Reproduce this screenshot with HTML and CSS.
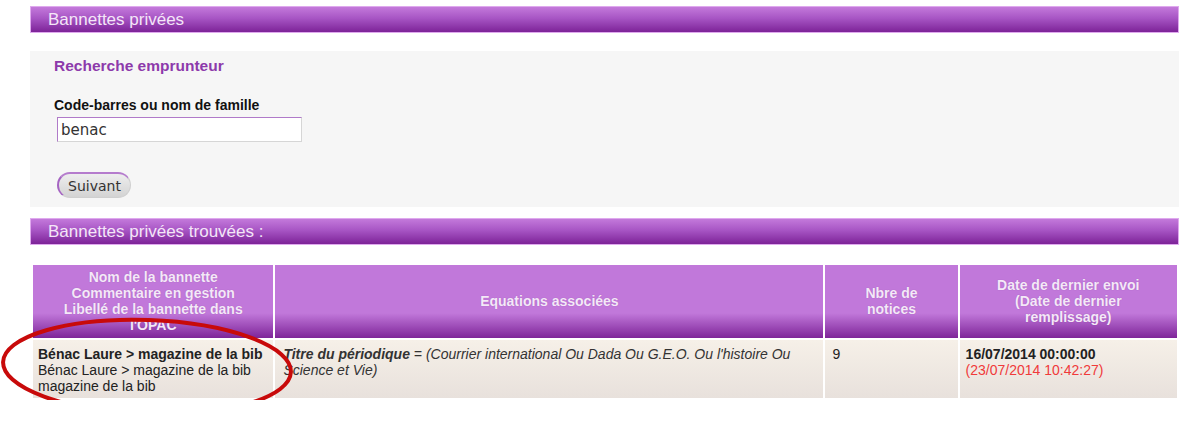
FILE: index.html
```html
<!DOCTYPE html>
<html lang="fr">
<head>
<meta charset="utf-8">
<title>Bannettes privées</title>
<link rel="stylesheet" href="styles.css">
</head>
<body>
<div class="page">
  <div class="bar">Bannettes privées</div>
  <form class="panel">
    <h3 class="panel-title">Recherche emprunteur</h3>
    <label class="field-label" for="q">Code-barres ou nom de famille</label>
    <input class="field" id="q" type="text" value="benac">
    <div class="actions"><button type="button" class="btn">Suivant</button></div>
  </form>
  <div class="bar bar2">Bannettes privées trouvées :</div>
  <div class="table-wrap">
    <table class="results">
      <thead>
        <tr>
          <th class="c1">Nom de la bannette<br>Commentaire en gestion<br>Libellé de la bannette dans l'OPAC</th>
          <th class="c2">Equations associées</th>
          <th class="c3">Nbre de<br>notices</th>
          <th class="c4">Date de dernier envoi<br>(Date de dernier remplissage)</th>
        </tr>
      </thead>
      <tbody>
        <tr>
          <td class="d1"><b>Bénac Laure &gt; magazine de la bib</b><br>Bénac Laure &gt; magazine de la bib<br>magazine de la bib</td>
          <td class="eq"><b>Titre du périodique</b> = (Courrier international Ou Dada Ou G.E.O. Ou l'histoire Ou Science et Vie)</td>
          <td class="d3">9</td>
          <td class="d4"><b>16/07/2014 00:00:00</b><br><span class="red">(23/07/2014 10:42:27)</span></td>
        </tr>
      </tbody>
    </table>
    <svg class="circle" width="300" height="110" viewBox="0 0 300 110" aria-hidden="true">
      <ellipse cx="147" cy="52" rx="144" ry="47" fill="none" stroke="#c80a0a" stroke-width="4" transform="rotate(2 147 52)"/>
    </svg>
  </div>
</div>
</body>
</html>
```
FILE: styles.css
```css
html, body { margin: 0; padding: 0; background: #fff; }
body { font-family: "Liberation Sans", Arial, sans-serif; color: #222; }
.page { width: 1149px; padding: 6px 0 0 30px; }
.bar {
  height: 27px;
  box-sizing: border-box;
  border: 1px solid #dfa9ee;
  background: linear-gradient(#c379db 0%, #a755c4 45%, #7d2398 100%);
  color: #f4e6f8;
  font-size: 17px;
  line-height: 25px;
  padding-left: 17px;
}
.panel {
  margin: 18px 0 0;
  height: 156px;
  box-sizing: border-box;
  background: #f6f6f6;
  padding: 6px 0 0 24px;
}
.panel-title {
  margin: 0;
  font-size: 15.5px;
  line-height: 18px;
  color: #8d3aab;
  font-weight: bold;
}
.field-label {
  display: block;
  margin-top: 22px;
  font-size: 14px;
  font-weight: bold;
  line-height: 17px;
  color: #111;
}
.field {
  display: block;
  margin: 3px 0 0 3px;
  width: 245px;
  height: 25px;
  box-sizing: border-box;
  border: 1px solid #d6d6d6;
  border-top-color: #b07ac9;
  border-left-color: #b07ac9;
  background: #fff;
  font-family: "DejaVu Sans", sans-serif;
  font-size: 15px;
  color: #333;
  padding: 0 3px;
  outline: none;
}
.actions { margin: 30px 0 0 3px; }
.btn {
  width: 74px;
  height: 26px;
  border-radius: 13px;
  border: 1px solid #cfcfcf;
  border-left: 2px solid #a564c2;
  border-top: 2px solid #b57ccd;
  background: linear-gradient(#eeeeee, #d3d3d3);
  font-family: "DejaVu Sans", sans-serif;
  font-size: 14px;
  color: #333;
  padding: 0;
}
.bar2 { margin-top: 11px; }
.table-wrap { position: relative; margin-top: 18px; }
.results {
  width: 1148px;
  margin-left: 1px;
  border-collapse: separate;
  border-spacing: 2px;
  font-size: 14px;
}
.results th {
  height: 73px;
  box-sizing: border-box;
  padding: 3px 4px 4px;
  background: linear-gradient(#c178da 0%, #c178da 66%, #7e2599 100%);
  color: #f4e8f8;
  font-size: 14px;
  line-height: 16px;
  font-weight: bold;
  text-shadow: 0 0 1px rgba(90,20,110,0.3);
}
.results .c1 { width: 240px; padding-left: 14px; padding-right: 14px; }
.results .c2 { width: 547px; }
.results .c3 { width: 132px; padding-left: 30px; padding-right: 30px; }
.results .c4 { width: 217px; padding-left: 28px; padding-right: 28px; }
.results td {
  height: 58px;
  box-sizing: border-box;
  vertical-align: top;
  padding: 6px 5px 4px;
  line-height: 16px;
  color: #222;
  background: linear-gradient(#f6f0e8, #e8e1dc);
}
.results td.eq { font-style: italic; padding-left: 8px; color: #333; }
.results td.d3 { padding-left: 7px; }
.results td.d4 { padding-left: 6px; }
.red { color: #f03a3a; }
.circle { position: absolute; left: -30px; top: 52px; }
```
